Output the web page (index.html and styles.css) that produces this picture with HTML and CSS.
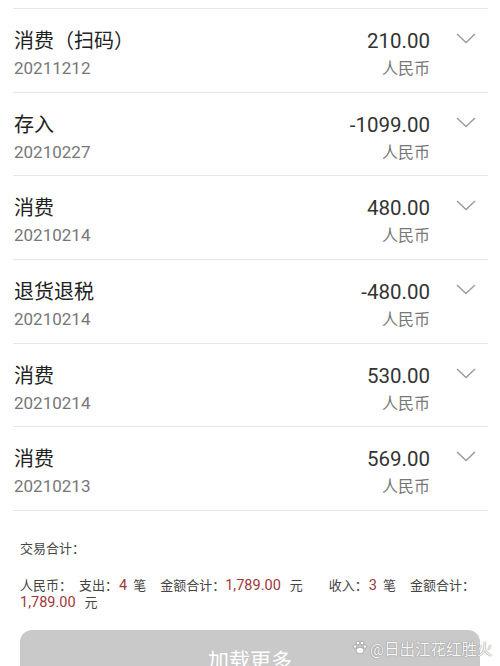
FILE: index.html
```html
<!DOCTYPE html>
<html lang="zh">
<head>
<meta charset="utf-8">
<link rel="stylesheet" href="styles.css">
</head>
<body>
<div class="page">
  <div class="list">
    <div class="row">
      <div class="left"><div class="title">消费（扫码）</div><div class="date">20211212</div></div>
      <div class="right"><div class="amount">210.00</div><div class="cur">人民币</div></div>
      <svg class="chev" width="20" height="11" viewBox="0 0 20 11"><path d="M1 1 L10 9.5 L19 1" fill="none" stroke="#9a9a9a" stroke-width="1.4"/></svg>
    </div>
    <div class="row">
      <div class="left"><div class="title">存入</div><div class="date">20210227</div></div>
      <div class="right"><div class="amount">-1099.00</div><div class="cur">人民币</div></div>
      <svg class="chev" width="20" height="11" viewBox="0 0 20 11"><path d="M1 1 L10 9.5 L19 1" fill="none" stroke="#9a9a9a" stroke-width="1.4"/></svg>
    </div>
    <div class="row">
      <div class="left"><div class="title">消费</div><div class="date">20210214</div></div>
      <div class="right"><div class="amount">480.00</div><div class="cur">人民币</div></div>
      <svg class="chev" width="20" height="11" viewBox="0 0 20 11"><path d="M1 1 L10 9.5 L19 1" fill="none" stroke="#9a9a9a" stroke-width="1.4"/></svg>
    </div>
    <div class="row">
      <div class="left"><div class="title">退货退税</div><div class="date">20210214</div></div>
      <div class="right"><div class="amount">-480.00</div><div class="cur">人民币</div></div>
      <svg class="chev" width="20" height="11" viewBox="0 0 20 11"><path d="M1 1 L10 9.5 L19 1" fill="none" stroke="#9a9a9a" stroke-width="1.4"/></svg>
    </div>
    <div class="row">
      <div class="left"><div class="title">消费</div><div class="date">20210214</div></div>
      <div class="right"><div class="amount">530.00</div><div class="cur">人民币</div></div>
      <svg class="chev" width="20" height="11" viewBox="0 0 20 11"><path d="M1 1 L10 9.5 L19 1" fill="none" stroke="#9a9a9a" stroke-width="1.4"/></svg>
    </div>
    <div class="row">
      <div class="left"><div class="title">消费</div><div class="date">20210213</div></div>
      <div class="right"><div class="amount">569.00</div><div class="cur">人民币</div></div>
      <svg class="chev" width="20" height="11" viewBox="0 0 20 11"><path d="M1 1 L10 9.5 L19 1" fill="none" stroke="#9a9a9a" stroke-width="1.4"/></svg>
    </div>
  </div>
  <div class="summary">
    <div class="sum-title">交易合计：</div>
    <div class="sum-line"><span>人民币：</span><span class="g1">支出：</span><span class="red n">4</span><span class="g2">笔</span><span class="g3">金额合计：</span><wbr><span class="red">1,789.00</span><span class="g4">元</span><span class="g5">收入：</span><span class="red n">3</span><span class="g2">笔</span><span class="g3">金额合计：</span><wbr><span class="red">1,789.00</span><span class="g4">元</span></div>
  </div>
  <div class="btn-wrap">
    <div class="btn">加载更多</div>
    <div class="watermark">
      <svg width="16" height="15" viewBox="0 0 16 15"><g fill="#ffffff" stroke="#9a9a9a" stroke-width="0.8"><ellipse cx="8" cy="10.5" rx="4" ry="3.3"/><circle cx="3" cy="6.5" r="1.8"/><circle cx="6" cy="3" r="1.8"/><circle cx="10" cy="3" r="1.8"/><circle cx="13" cy="6.5" r="1.8"/></g></svg>
      <span>@日出江花红胜火</span>
    </div>
  </div>
</div>
</body>
</html>
```
FILE: styles.css
```css
html, body {
  margin: 0;
  padding: 0;
  background: #ffffff;
}
body {
  font-family: Roboto, "Noto Sans CJK SC", sans-serif;
  width: 500px;
  height: 666px;
  overflow: hidden;
}
.page {
  padding-top: 8px;
}
.list {
  margin: 0 12px 0 13px;
  border-top: 1px solid #e6e6e6;
}
.row {
  box-sizing: border-box;
  height: 83.67px;
  border-bottom: 1px solid #e6e6e6;
  display: flex;
  align-items: flex-start;
  padding: 19px 12px 0 1px;
}
.left {
  flex: 1;
}
.title {
  font-size: 20px;
  line-height: 26px;
  color: #222222;
}
.date {
  font-size: 17px;
  line-height: 24px;
  color: #777777;
  margin-top: 2px;
}
.right {
  text-align: right;
}
.amount {
  font-size: 20.5px;
  line-height: 26px;
  color: #333333;
}
.cur {
  font-size: 16px;
  line-height: 24px;
  color: #777777;
  margin-top: 3px;
}
.chev {
  margin-left: 26px;
  margin-top: 5px;
  display: block;
}
.summary {
  padding: 29px 20px 0 20px;
  color: #444444;
  font-size: 13px;
}
.sum-title {
  line-height: 18px;
}
.sum-line {
  margin-top: 19px;
  line-height: 17px;
}
.red {
  color: #a0383c;
  font-size: 14.5px;
}
.g1 { margin-left: 7px; }
.n { margin-left: 1px; }
.g2 { margin-left: 6px; }
.g3 { margin-left: 14px; }
.g4 { margin-left: 9px; }
.g5 { margin-left: 26px; }
.btn-wrap {
  position: relative;
  margin: 19px 20px 0 20px;
}
.btn {
  height: 56px;
  border-radius: 12px;
  background: #c9c9c9;
  color: #ffffff;
  font-size: 21px;
  display: flex;
  align-items: center;
  justify-content: center;
  padding-top: 2px;
  box-sizing: border-box;
}
.watermark {
  position: absolute;
  left: 332px;
  top: 7px;
  display: flex;
  align-items: center;
  gap: 2px;
  color: rgba(255,255,255,0.95);
  font-size: 15.5px;
  white-space: nowrap;
  text-shadow: 0 0 1px #8a8a8a, 0 0 1px #8a8a8a;
}
```
